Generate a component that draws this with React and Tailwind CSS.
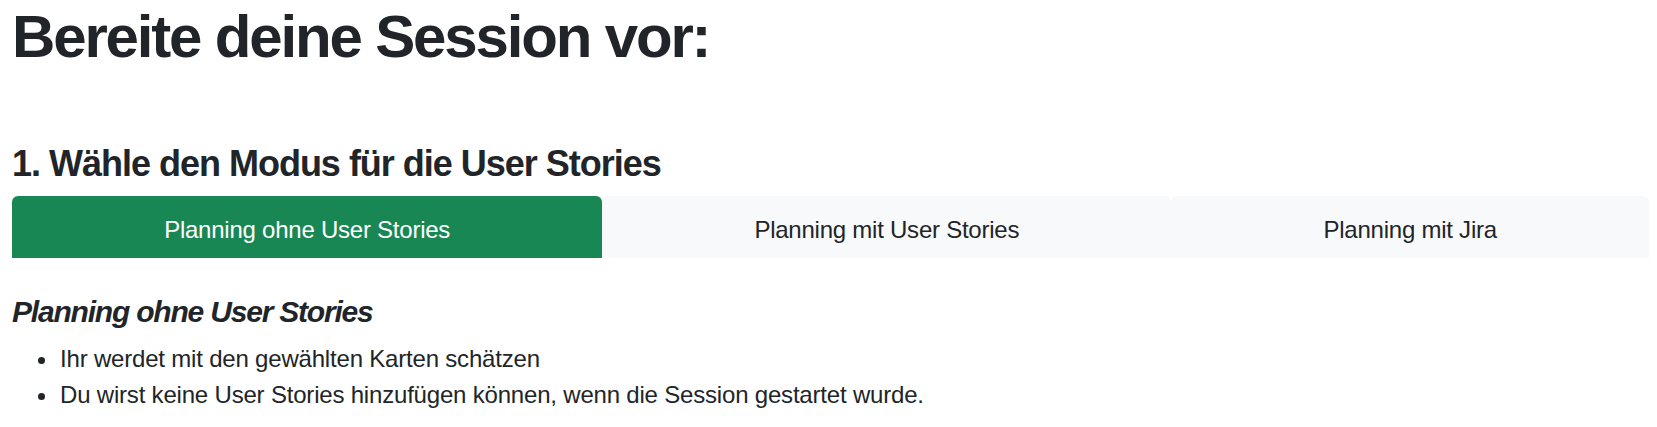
import { useState } from 'react';

const MODES = [
  {
    key: 'none',
    label: 'Planning ohne User Stories',
    hints: [
      'Ihr werdet mit den gewählten Karten schätzen',
      'Du wirst keine User Stories hinzufügen können, wenn die Session gestartet wurde.',
    ],
  },
  {
    key: 'stories',
    label: 'Planning mit User Stories',
    hints: [
      'Ihr werdet User Stories mit den gewählten Karten schätzen',
      'Du kannst User Stories vor und während der Session hinzufügen.',
    ],
  },
  {
    key: 'jira',
    label: 'Planning mit Jira',
    hints: [
      'Ihr werdet User Stories aus Jira schätzen',
      'Die Schätzungen werden nach Jira übertragen.',
    ],
  },
];

const ModeTab = ({ mode, active, onSelect }) => {
  const isActive = active === mode.key;
  return (
    <button
      onClick={() => onSelect(mode.key)}
      className={`flex-auto rounded-t-md px-[24px] pt-[16px] pb-[10px] text-center text-[24px] leading-[36px] tracking-[-0.01em] ${
        isActive ? 'bg-[#198754] text-white' : 'bg-[#f8f9fa] text-[#212529]'
      }`}
    >
      {mode.label}
    </button>
  );
};

export default function App() {
  const [active, setActive] = useState('none');
  const current = MODES.find(m => m.key === active);

  return (
    <div className="min-h-screen bg-white pl-[12px] pr-[8px] text-[#212529] font-['Liberation_Sans',Arial,sans-serif]">
      <h1 className="mt-px text-[60px] leading-[72px] font-bold tracking-[-0.036em]">
        Bereite deine Session vor:
      </h1>

      <h4 className="mt-[69px] text-[36px] leading-[43px] font-bold tracking-[-0.028em]">
        1. Wähle den Modus für die User Stories
      </h4>

      <div className="mt-[11px] flex">
        {MODES.map(m => (
          <ModeTab key={m.key} mode={m} active={active} onSelect={setActive} />
        ))}
      </div>

      <h5 className="mt-[36px] text-[30px] leading-[36px] font-bold italic tracking-[-0.04em]">
        {current.label}
      </h5>

      <ul className="mt-[11px] list-disc pl-[47px] text-[24px] leading-[36px] tracking-[-0.008em]">
        {current.hints.map(h => (
          <li key={h} className="pl-px">{h}</li>
        ))}
      </ul>
    </div>
  );
}
